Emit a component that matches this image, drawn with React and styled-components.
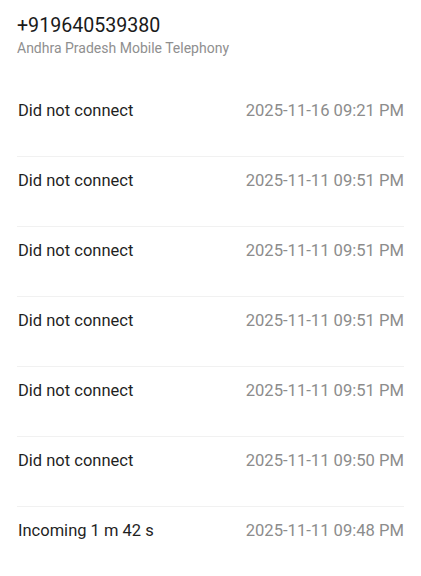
import React from "react";
import styled, { createGlobalStyle } from "styled-components";

const Global = createGlobalStyle`
  html, body { margin: 0; padding: 0; background: #ffffff; }
  body { font-family: Roboto, "Noto Sans", Arial, sans-serif; -webkit-font-smoothing: antialiased; }
`;

const Page = styled.div`
  width: 421px;
  min-height: 576px;
  background: #ffffff;
  overflow: hidden;
`;

const Header = styled.header`
  display: flex;
  flex-direction: column;
  padding: 14px 17px 0 17px;
`;

const Number = styled.div`
  font-size: 19.6px;
  line-height: 24px;
  color: #1a1a1a;
`;

const Carrier = styled.div`
  margin-top: 1px;
  font-size: 14px;
  line-height: 19px;
  color: #8f8f8f;
`;

const List = styled.div`
  display: flex;
  flex-direction: column;
  margin-top: 28px;
`;

const Row = styled.div`
  display: flex;
  justify-content: space-between;
  align-items: flex-start;
  height: 70px;
  box-sizing: border-box;
  margin: 0 17px;
  padding: 13px 0 0 1px;
  border-top: 1px solid #f1f1f1;
  &:first-child { border-top-color: transparent; }
`;

const Label = styled.span`
  font-size: 16.5px;
  line-height: 22px;
  color: #1f1f1f;
`;

const Time = styled.span`
  font-size: 16.6px;
  line-height: 22px;
  color: #8c8c8c;
`;

const calls = [
  ["Did not connect", "2025-11-16 09:21 PM"],
  ["Did not connect", "2025-11-11 09:51 PM"],
  ["Did not connect", "2025-11-11 09:51 PM"],
  ["Did not connect", "2025-11-11 09:51 PM"],
  ["Did not connect", "2025-11-11 09:51 PM"],
  ["Did not connect", "2025-11-11 09:50 PM"],
  ["Incoming 1 m 42 s", "2025-11-11 09:48 PM"],
];

export default function App() {
  return (
    <Page>
      <Global />
      <Header>
        <Number>+919640539380</Number>
        <Carrier>Andhra Pradesh Mobile Telephony</Carrier>
      </Header>
      <List>
        {calls.map(([label, time], i) => (
          <Row key={i}>
            <Label>{label}</Label>
            <Time>{time}</Time>
          </Row>
        ))}
      </List>
    </Page>
  );
}
